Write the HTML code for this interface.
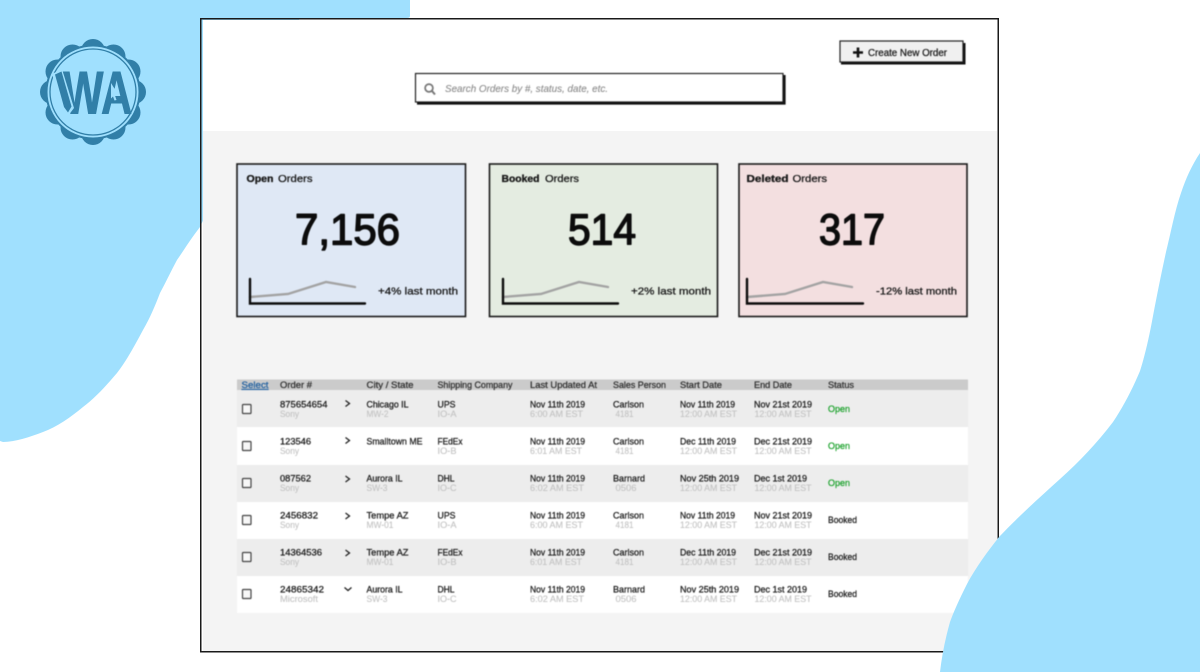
<!DOCTYPE html>
<html><head><meta charset="utf-8"><style>
html,body{margin:0;padding:0;background:#fff;width:1200px;height:672px;overflow:hidden}
svg{display:block}
text{font-family:"Liberation Sans",sans-serif;font-size:9px;fill:#222;stroke:#222;stroke-width:.28}
.s{fill:#c2c2c2;stroke:#c2c2c2;stroke-width:.1}
.h{fill:#333;stroke:#333}
.o{fill:#1fa32f;stroke:#1fa32f}
.t{font-size:10.5px;fill:#1a1a1a;stroke:#1a1a1a;stroke-width:.3}
.b{font-weight:bold;stroke-width:.35}
.n{font-size:44px;fill:#0c0c0c;stroke:#0c0c0c;stroke-width:1.5;stroke-linejoin:round}
#ui{filter:blur(.4px)}
</style></head><body>
<svg width="1200" height="672" viewBox="0 0 1200 672" xmlns="http://www.w3.org/2000/svg">
<path fill="#a0e0fe" d="M0 0H410V16Q410 18 407 18H300L200 227C190 240 184 250 177 260C171 271 166 282 160 293C155 306 150 318 143 330C135 345 127 360 117 373C106 386 95 398 83 407C71 417 57 427 43 432C30 437 15 442 3 442L0 441Z"/>
<rect x="203" y="20" width="794" height="111" fill="#fff"/>
<rect x="203" y="131" width="794" height="520" fill="#f4f4f4"/>
<rect x="200.750" y="18.750" width="797.500" height="633" fill="none" stroke="#1a1a1a" stroke-width="1.500"/>
<g id="ui">
<!-- button -->
<rect x="840" y="41" width="123" height="21" fill="#f0f0f0" stroke="#222" stroke-width="1.200"/>
<path d="M841 63.500H964.500V43" fill="none" stroke="#111" stroke-width="2"/>
<path d="M858 47.500V57.500M853 52.500H863" stroke="#111" stroke-width="2.600" fill="none"/>
<text x="868" y="56" textLength="79" lengthAdjust="spacingAndGlyphs" style="font-size:10px">Create New Order</text>
<!-- search -->
<rect x="415.500" y="73.500" width="367.500" height="28.500" fill="#fff" stroke="#222" stroke-width="1.200"/>
<path d="M417 103.500H784.500V75" fill="none" stroke="#111" stroke-width="2.200"/>
<circle cx="429" cy="88" r="3.900" fill="none" stroke="#777" stroke-width="1.700"/>
<path d="M432 91L435 94.500" stroke="#777" stroke-width="2"/>
<text x="445" y="92" textLength="163" lengthAdjust="spacingAndGlyphs" style="font-size:10px;font-style:italic;fill:#8a8a8a;stroke:#8a8a8a;stroke-width:.1">Search Orders by #, status, date, etc.</text>

<!-- cards -->
<rect x="237" y="164" width="228.500" height="152.500" fill="#dfe8f5" stroke="#1a1a1a" stroke-width="1.600"/>
<rect x="489.500" y="164" width="228" height="152.500" fill="#e4ece1" stroke="#1a1a1a" stroke-width="1.600"/>
<rect x="739" y="164" width="228" height="152.500" fill="#f3dfe0" stroke="#1a1a1a" stroke-width="1.600"/>

<text class="t b" x="246.500" y="182" textLength="27" lengthAdjust="spacingAndGlyphs">Open</text>
<text class="t" x="278" y="182" textLength="34.500" lengthAdjust="spacingAndGlyphs">Orders</text>
<text class="t b" x="501.500" y="182" textLength="38" lengthAdjust="spacingAndGlyphs">Booked</text>
<text class="t" x="545" y="182" textLength="34" lengthAdjust="spacingAndGlyphs">Orders</text>
<text class="t b" x="746.500" y="182" textLength="42" lengthAdjust="spacingAndGlyphs">Deleted</text>
<text class="t" x="792.500" y="182" textLength="34.500" lengthAdjust="spacingAndGlyphs">Orders</text>

<text class="n" x="295" y="244.500" textLength="105" lengthAdjust="spacingAndGlyphs">7,156</text>
<text class="n" x="568" y="244.500" textLength="68" lengthAdjust="spacingAndGlyphs">514</text>
<text class="n" x="819" y="244.500" textLength="66" lengthAdjust="spacingAndGlyphs">317</text>

<g fill="none" stroke-linecap="round">
<path d="M250 297L288 294L326 282L355 287" stroke="#a3a3a3" stroke-width="2.400"/>
<path d="M250 279V303.500H365" stroke="#0c0c0c" stroke-width="2.400"/>
<path d="M503 297L541 294L579 282L608 287" stroke="#a3a3a3" stroke-width="2.400"/>
<path d="M503 279V303.500H618" stroke="#0c0c0c" stroke-width="2.400"/>
<path d="M747 297L785 294L823 282L852 287" stroke="#a3a3a3" stroke-width="2.400"/>
<path d="M747 279V303.500H863" stroke="#0c0c0c" stroke-width="2.400"/>
</g>
<text class="t" x="378" y="294.500" textLength="80" lengthAdjust="spacingAndGlyphs">+4% last month</text>
<text class="t" x="631" y="294.500" textLength="80" lengthAdjust="spacingAndGlyphs">+2% last month</text>
<text class="t" x="876" y="294.500" textLength="81" lengthAdjust="spacingAndGlyphs">-12% last month</text>

<!-- table -->
<rect x="237" y="379.500" width="731" height="10.500" fill="#cbcbcb"/>
<rect x="237" y="390" width="731" height="37" fill="#ededed"/>
<rect x="237" y="427" width="731" height="38" fill="#fff"/>
<rect x="237" y="465" width="731" height="37" fill="#ededed"/>
<rect x="237" y="502" width="731" height="37" fill="#fff"/>
<rect x="237" y="539" width="731" height="37" fill="#ededed"/>
<rect x="237" y="576" width="731" height="37" fill="#fff"/>

<g class="hd">
<text x="241.500" y="388" textLength="27" lengthAdjust="spacingAndGlyphs" style="fill:#1f5f9f;stroke:#1f5f9f;text-decoration:underline">Select</text>
<text class="h" x="280" y="388" textLength="32" lengthAdjust="spacingAndGlyphs">Order #</text>
<text class="h" x="366.500" y="388" textLength="47" lengthAdjust="spacingAndGlyphs">City / State</text>
<text class="h" x="437.500" y="388" textLength="75" lengthAdjust="spacingAndGlyphs">Shipping Company</text>
<text class="h" x="530" y="388" textLength="67" lengthAdjust="spacingAndGlyphs">Last Updated At</text>
<text class="h" x="613" y="388" textLength="53" lengthAdjust="spacingAndGlyphs">Sales Person</text>
<text class="h" x="680" y="388" textLength="42" lengthAdjust="spacingAndGlyphs">Start Date</text>
<text class="h" x="754" y="388" textLength="38" lengthAdjust="spacingAndGlyphs">End Date</text>
<text class="h" x="828" y="388" textLength="26" lengthAdjust="spacingAndGlyphs">Status</text>
</g>

<!-- checkboxes -->
<g fill="#f7f7f7" stroke="#444" stroke-width="1.200">
<rect x="242.500" y="404.500" width="8.500" height="9" rx=".8"/>
<rect x="242.500" y="441.500" width="8.500" height="9" rx=".8"/>
<rect x="242.500" y="478.500" width="8.500" height="9" rx=".8"/>
<rect x="242.500" y="515.500" width="8.500" height="9" rx=".8"/>
<rect x="242.500" y="552.500" width="8.500" height="9" rx=".8"/>
<rect x="242.500" y="589.500" width="8.500" height="9" rx=".8"/>
</g>
<!-- chevrons -->
<g fill="none" stroke="#222" stroke-width="1.300">
<path d="M345.500 400.500L349.500 403.500L345.500 406.500"/>
<path d="M345.500 437.500L349.500 440.500L345.500 443.500"/>
<path d="M345.500 476L349.500 479L345.500 482"/>
<path d="M345.500 513L349.500 516L345.500 519"/>
<path d="M345.500 550L349.500 553L345.500 556"/>
<path d="M344.500 587.500L348 590.500L351.500 587.500"/>
</g>

<!-- row 1 -->
<text x="280" y="407.500" textLength="47.500" lengthAdjust="spacingAndGlyphs">875654654</text>
<text class="s" x="280" y="417" textLength="19" lengthAdjust="spacingAndGlyphs">Sony</text>
<text x="366.500" y="407.500" textLength="42" lengthAdjust="spacingAndGlyphs">Chicago IL</text>
<text class="s" x="366.500" y="417" textLength="22" lengthAdjust="spacingAndGlyphs">MW-2</text>
<text x="437.500" y="407.500" textLength="18" lengthAdjust="spacingAndGlyphs">UPS</text>
<text class="s" x="437.500" y="417" textLength="19" lengthAdjust="spacingAndGlyphs">IO-A</text>
<text x="530" y="407.500" textLength="55" lengthAdjust="spacingAndGlyphs">Nov 11th 2019</text>
<text class="s" x="530" y="417" textLength="53" lengthAdjust="spacingAndGlyphs">6:00 AM EST</text>
<text x="613" y="407.500" textLength="31" lengthAdjust="spacingAndGlyphs">Carlson</text>
<text class="s" x="615.500" y="417" textLength="18" lengthAdjust="spacingAndGlyphs">4181</text>
<text x="680" y="407.500" textLength="55" lengthAdjust="spacingAndGlyphs">Nov 11th 2019</text>
<text class="s" x="680" y="417" textLength="57" lengthAdjust="spacingAndGlyphs">12:00 AM EST</text>
<text x="754" y="407.500" textLength="58" lengthAdjust="spacingAndGlyphs">Nov 21st 2019</text>
<text class="s" x="754.500" y="417" textLength="57" lengthAdjust="spacingAndGlyphs">12:00 AM EST</text>
<text class="o" x="828" y="412" textLength="22" lengthAdjust="spacingAndGlyphs">Open</text>

<!-- row 2 -->
<text x="280" y="444.500" textLength="31" lengthAdjust="spacingAndGlyphs">123546</text>
<text class="s" x="280" y="454" textLength="19" lengthAdjust="spacingAndGlyphs">Sony</text>
<text x="366.500" y="444.500" textLength="56" lengthAdjust="spacingAndGlyphs">Smalltown ME</text>
<text x="437.500" y="444.500" textLength="25" lengthAdjust="spacingAndGlyphs">FEdEx</text>
<text class="s" x="437.500" y="454" textLength="19" lengthAdjust="spacingAndGlyphs">IO-B</text>
<text x="530" y="444.500" textLength="55" lengthAdjust="spacingAndGlyphs">Nov 11th 2019</text>
<text class="s" x="530" y="454" textLength="52" lengthAdjust="spacingAndGlyphs">6:01 AM EST</text>
<text x="613" y="444.500" textLength="31" lengthAdjust="spacingAndGlyphs">Carlson</text>
<text class="s" x="615.500" y="454" textLength="18" lengthAdjust="spacingAndGlyphs">4181</text>
<text x="680" y="444.500" textLength="56" lengthAdjust="spacingAndGlyphs">Dec 11th 2019</text>
<text class="s" x="680" y="454" textLength="57" lengthAdjust="spacingAndGlyphs">12:00 AM EST</text>
<text x="754" y="444.500" textLength="58" lengthAdjust="spacingAndGlyphs">Dec 21st 2019</text>
<text class="s" x="754.500" y="454" textLength="57" lengthAdjust="spacingAndGlyphs">12:00 AM EST</text>
<text class="o" x="828" y="449" textLength="22" lengthAdjust="spacingAndGlyphs">Open</text>

<!-- row 3 -->
<text x="280" y="481.500" textLength="31" lengthAdjust="spacingAndGlyphs">087562</text>
<text class="s" x="280" y="491" textLength="19" lengthAdjust="spacingAndGlyphs">Sony</text>
<text x="366.500" y="481.500" textLength="36" lengthAdjust="spacingAndGlyphs">Aurora IL</text>
<text class="s" x="366.500" y="491" textLength="21" lengthAdjust="spacingAndGlyphs">SW-3</text>
<text x="437.500" y="481.500" textLength="17" lengthAdjust="spacingAndGlyphs">DHL</text>
<text class="s" x="437.500" y="491" textLength="19" lengthAdjust="spacingAndGlyphs">IO-C</text>
<text x="530" y="481.500" textLength="55" lengthAdjust="spacingAndGlyphs">Nov 11th 2019</text>
<text class="s" x="530" y="491" textLength="54" lengthAdjust="spacingAndGlyphs">6:02 AM EST</text>
<text x="613" y="481.500" textLength="32" lengthAdjust="spacingAndGlyphs">Barnard</text>
<text class="s" x="615.500" y="491" textLength="21" lengthAdjust="spacingAndGlyphs">0506</text>
<text x="680" y="481.500" textLength="59" lengthAdjust="spacingAndGlyphs">Nov 25th 2019</text>
<text class="s" x="680" y="491" textLength="57" lengthAdjust="spacingAndGlyphs">12:00 AM EST</text>
<text x="754" y="481.500" textLength="53" lengthAdjust="spacingAndGlyphs">Dec 1st 2019</text>
<text class="s" x="754.500" y="491" textLength="57" lengthAdjust="spacingAndGlyphs">12:00 AM EST</text>
<text class="o" x="828" y="486" textLength="22" lengthAdjust="spacingAndGlyphs">Open</text>

<!-- row 4 -->
<text x="280" y="518.500" textLength="38" lengthAdjust="spacingAndGlyphs">2456832</text>
<text class="s" x="280" y="528" textLength="19" lengthAdjust="spacingAndGlyphs">Sony</text>
<text x="366.500" y="518.500" textLength="42" lengthAdjust="spacingAndGlyphs">Tempe AZ</text>
<text class="s" x="366.500" y="528" textLength="27" lengthAdjust="spacingAndGlyphs">MW-01</text>
<text x="437.500" y="518.500" textLength="18" lengthAdjust="spacingAndGlyphs">UPS</text>
<text class="s" x="437.500" y="528" textLength="19" lengthAdjust="spacingAndGlyphs">IO-A</text>
<text x="530" y="518.500" textLength="55" lengthAdjust="spacingAndGlyphs">Nov 11th 2019</text>
<text class="s" x="530" y="528" textLength="53" lengthAdjust="spacingAndGlyphs">6:00 AM EST</text>
<text x="613" y="518.500" textLength="31" lengthAdjust="spacingAndGlyphs">Carlson</text>
<text class="s" x="615.500" y="528" textLength="18" lengthAdjust="spacingAndGlyphs">4181</text>
<text x="680" y="518.500" textLength="55" lengthAdjust="spacingAndGlyphs">Nov 11th 2019</text>
<text class="s" x="680" y="528" textLength="57" lengthAdjust="spacingAndGlyphs">12:00 AM EST</text>
<text x="754" y="518.500" textLength="58" lengthAdjust="spacingAndGlyphs">Nov 21st 2019</text>
<text class="s" x="754.500" y="528" textLength="57" lengthAdjust="spacingAndGlyphs">12:00 AM EST</text>
<text x="828" y="523" textLength="29" lengthAdjust="spacingAndGlyphs">Booked</text>

<!-- row 5 -->
<text x="280" y="555.500" textLength="42" lengthAdjust="spacingAndGlyphs">14364536</text>
<text class="s" x="280" y="565" textLength="19" lengthAdjust="spacingAndGlyphs">Sony</text>
<text x="366.500" y="555.500" textLength="42" lengthAdjust="spacingAndGlyphs">Tempe AZ</text>
<text class="s" x="366.500" y="565" textLength="27" lengthAdjust="spacingAndGlyphs">MW-01</text>
<text x="437.500" y="555.500" textLength="25" lengthAdjust="spacingAndGlyphs">FEdEx</text>
<text class="s" x="437.500" y="565" textLength="19" lengthAdjust="spacingAndGlyphs">IO-B</text>
<text x="530" y="555.500" textLength="55" lengthAdjust="spacingAndGlyphs">Nov 11th 2019</text>
<text class="s" x="530" y="565" textLength="52" lengthAdjust="spacingAndGlyphs">6:01 AM EST</text>
<text x="613" y="555.500" textLength="31" lengthAdjust="spacingAndGlyphs">Carlson</text>
<text class="s" x="615.500" y="565" textLength="18" lengthAdjust="spacingAndGlyphs">4181</text>
<text x="680" y="555.500" textLength="56" lengthAdjust="spacingAndGlyphs">Dec 11th 2019</text>
<text class="s" x="680" y="565" textLength="57" lengthAdjust="spacingAndGlyphs">12:00 AM EST</text>
<text x="754" y="555.500" textLength="58" lengthAdjust="spacingAndGlyphs">Dec 21st 2019</text>
<text class="s" x="754.500" y="565" textLength="57" lengthAdjust="spacingAndGlyphs">12:00 AM EST</text>
<text x="828" y="560" textLength="29" lengthAdjust="spacingAndGlyphs">Booked</text>

<!-- row 6 -->
<text x="280" y="592.500" textLength="44" lengthAdjust="spacingAndGlyphs">24865342</text>
<text class="s" x="280" y="602" textLength="38" lengthAdjust="spacingAndGlyphs">Microsoft</text>
<text x="366.500" y="592.500" textLength="36" lengthAdjust="spacingAndGlyphs">Aurora IL</text>
<text class="s" x="366.500" y="602" textLength="21" lengthAdjust="spacingAndGlyphs">SW-3</text>
<text x="437.500" y="592.500" textLength="17" lengthAdjust="spacingAndGlyphs">DHL</text>
<text class="s" x="437.500" y="602" textLength="19" lengthAdjust="spacingAndGlyphs">IO-C</text>
<text x="530" y="592.500" textLength="55" lengthAdjust="spacingAndGlyphs">Nov 11th 2019</text>
<text class="s" x="530" y="602" textLength="54" lengthAdjust="spacingAndGlyphs">6:02 AM EST</text>
<text x="613" y="592.500" textLength="32" lengthAdjust="spacingAndGlyphs">Barnard</text>
<text class="s" x="615.500" y="602" textLength="21" lengthAdjust="spacingAndGlyphs">0506</text>
<text x="680" y="592.500" textLength="59" lengthAdjust="spacingAndGlyphs">Nov 25th 2019</text>
<text class="s" x="680" y="602" textLength="57" lengthAdjust="spacingAndGlyphs">12:00 AM EST</text>
<text x="754" y="592.500" textLength="53" lengthAdjust="spacingAndGlyphs">Dec 1st 2019</text>
<text class="s" x="754.500" y="602" textLength="57" lengthAdjust="spacingAndGlyphs">12:00 AM EST</text>
<text x="828" y="597" textLength="29" lengthAdjust="spacingAndGlyphs">Booked</text>
</g>

<!-- lower right blob -->
<path fill="#a0e0fe" d="M1200 153C1192 165 1186 178 1181 193C1175 210 1171 232 1166 252C1161 275 1157 295 1153 316C1149 338 1145 355 1140 371C1132 390 1123 407 1113 422C1097 443 1080 461 1060 479C1040 497 1018 517 999 537C988 551 976 567 967 584C959 600 954 611 950 622C945 640 942 655 940 672H1200Z"/>

<!-- logo -->
<g fill="#317fa8" style="filter:blur(.3px)">
<circle cx="93" cy="92" r="47.500"/>
<circle cx="93" cy="51" r="12"/><circle cx="113.500" cy="56.500" r="12"/><circle cx="128.500" cy="71.500" r="12"/>
<circle cx="134" cy="92" r="12"/><circle cx="128.500" cy="112.500" r="12"/><circle cx="113.500" cy="127.500" r="12"/>
<circle cx="93" cy="133" r="12"/><circle cx="72.500" cy="127.500" r="12"/><circle cx="57.500" cy="112.500" r="12"/>
<circle cx="52" cy="92" r="12"/><circle cx="57.500" cy="71.500" r="12"/><circle cx="72.500" cy="56.500" r="12"/>
</g>
<circle cx="93" cy="92" r="45.500" fill="#a0e0fe"/>
<circle cx="93" cy="92" r="43" fill="none" stroke="#317fa8" stroke-width="1.300"/>
<text x="63" y="113.500" textLength="69" lengthAdjust="spacingAndGlyphs" style="font-size:60px;font-weight:bold;fill:#317fa8;stroke:#317fa8;stroke-width:1">WA</text>
<path d="M52 74L62 69L74 108L68 116L62 109Z" fill="#a0e0fe"/>
<path d="M55 74.500L61.500 71.500L71.500 106.500L68 112.500L64 107Z" fill="#317fa8"/>
<path d="M111 83L119 96L115 95.500L116.500 100L114.500 100.500L113 96.500L111 98.500Z" fill="#a0e0fe"/>
</svg>
</body></html>
